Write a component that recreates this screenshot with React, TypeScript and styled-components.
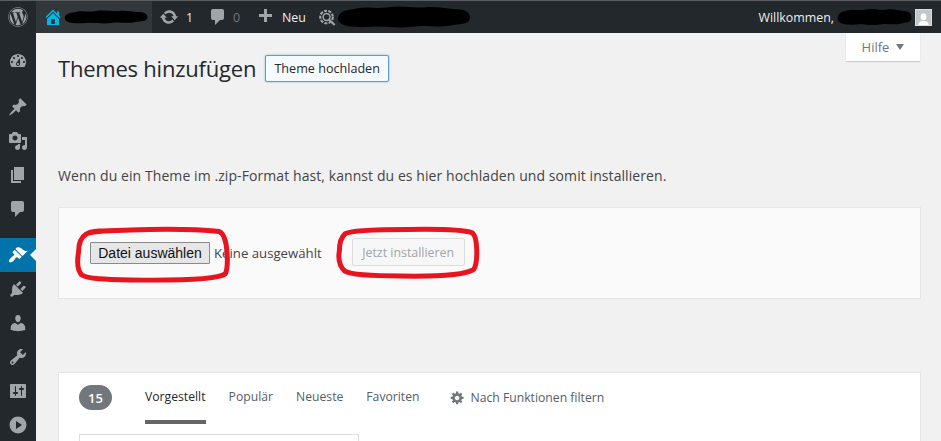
import React from 'react';
import styled, { createGlobalStyle } from 'styled-components';
import { FaWordpress } from 'react-icons/fa';

const GlobalStyle = createGlobalStyle`
  html, body {
    margin: 0;
    padding: 0;
    height: 100%;
    overflow: hidden;
    background: #f1f1f1;
    font-family: 'Open Sans', 'Noto Sans', sans-serif;
  }
`;

const tabs = ['Vorgestellt', 'Populär', 'Neueste', 'Favoriten'];

const paths = {
  home: 'M16 8.5l1.53 1.53-1.06 1.06L10 4.62l-6.47 6.47-1.06-1.06L10 2.5l4 4v-2h2v4zm-6-2.46l6 5.99V18H4v-5.97zM12 17v-5H8v5h4z',
  update:
    'M10.2 3.28c3.53 0 6.43 2.61 6.92 6h2.08l-3.5 4-3.5-4h2.32c-.45-1.97-2.21-3.45-4.32-3.45-1.45 0-2.73.71-3.54 1.78L4.95 5.66C6.23 4.2 8.11 3.28 10.2 3.28zm-.4 13.44c-3.52 0-6.43-2.61-6.92-6H.8l3.5-4c1.17 1.33 2.33 2.67 3.5 4H5.48c.45 1.97 2.21 3.45 4.32 3.45 1.45 0 2.73-.71 3.54-1.78l1.71 1.95c-1.28 1.46-3.15 2.38-5.25 2.38z',
  comment: 'M5 2h9c1.1 0 2 .9 2 2v7c0 1.1-.9 2-2 2h-2l-5 5v-5H5c-1.1 0-2-.9-2-2V4c0-1.1.9-2 2-2z',
  plus: 'M17 7v3h-5v5H9v-5H4V7h5V2h3v5h5z',
  dashboard:
    'M3.76 16h12.48c1.1-1.37 1.76-3.11 1.76-5 0-4.42-3.58-8-8-8s-8 3.58-8 8c0 1.89.66 3.63 1.76 5zM10 4c.55 0 1 .45 1 1s-.45 1-1 1-1-.45-1-1 .45-1 1-1zM6 6c.55 0 1 .45 1 1s-.45 1-1 1-1-.45-1-1 .45-1 1-1zm8 0c.55 0 1 .45 1 1s-.45 1-1 1-1-.45-1-1 .45-1 1-1zm-5.37 5.55L12 7v6c0 1.1-.9 2-2 2s-2-.9-2-2c0-.57.24-1.08.63-1.45zM4 10c.55 0 1 .45 1 1s-.45 1-1 1-1-.45-1-1 .45-1 1-1zm12 0c.55 0 1 .45 1 1s-.45 1-1 1-1-.45-1-1 .45-1 1-1zm-5 3c0-.55-.45-1-1-1s-1 .45-1 1 .45 1 1 1 1-.45 1-1z',
  pin: 'M10.44 3.02l1.82-1.82 6.36 6.35-1.83 1.82c-1.05-.68-2.48-.57-3.41.36l-.75.75c-.92.93-1.04 2.35-.35 3.41l-1.83 1.82-2.41-2.41-2.8 2.79c-.42.42-3.38 2.71-3.8 2.29s1.86-3.39 2.28-3.81l2.79-2.79L4.1 9.36l1.83-1.82c1.05.69 2.48.57 3.41-.36l.75-.75c.93-.92 1.05-2.35.35-3.41z',
  media:
    'M13 11V4c0-.55-.45-1-1-1h-1.67L9 1H5L3.67 3H2c-.55 0-1 .45-1 1v7c0 .55.45 1 1 1h10c.55 0 1-.45 1-1zM7 4.5c1.38 0 2.5 1.12 2.5 2.5S8.38 9.5 7 9.5 4.5 8.38 4.5 7 5.62 4.5 7 4.5zM14 6h5v10.5c0 1.38-1.12 2.5-2.5 2.5S14 17.88 14 16.5s1.12-2.5 2.5-2.5c.17 0 .34.02.5.05V9h-3V6zm-4 8.05V13h2v3.5c0 1.38-1.12 2.5-2.5 2.5S7 17.88 7 16.5 8.12 14 9.5 14c.17 0 .34.02.5.05z',
  page: 'M6 15V2h10v13H6zm-1 1h8v2H3V5h2v11z',
  brush:
    'M14.48 11.06L7.41 3.99l1.5-1.5c.5-.56 2.3-.47 3.51.32 1.21.8 1.43 1.28 2.91 2.1 1.18.64 2.45 1.26 4.45.85zm-.71.71L6.7 4.7 4.93 6.47c-.39.39-.39 1.02 0 1.41l1.06 1.06c.39.39.39 1.03 0 1.42-.6.6-1.43 1.11-2.21 1.69-.35.26-.7.53-1.01.84C1.43 14.23.4 16.08 1.4 17.07c.99 1 2.84-.03 4.18-1.36.31-.31.58-.66.85-1.02.57-.78 1.08-1.61 1.69-2.21.39-.39 1.02-.39 1.41 0l1.06 1.06c.39.39 1.02.39 1.41 0z',
  plugin:
    'M13.11 4.36L9.87 7.6 8 5.73l3.24-3.24c.35-.34 1.05-.2 1.56.32.52.51.66 1.21.31 1.55zm-8 1.77l.91-1.12 9.01 9.01-1.19.84c-.71.71-2.63 1.16-3.82 1.16H6.14L4.9 17.26c-.59.59-1.54.59-2.12 0-.59-.58-.59-1.53 0-2.12l1.24-1.24v-3.88c0-1.13.4-3.19 1.09-3.89zm7.26 3.97l3.24-3.24c.34-.35 1.04-.21 1.55.31.52.51.66 1.21.31 1.55l-3.24 3.25z',
  users:
    'M10 9.25c-2.27 0-2.73-3.44-2.73-3.44C7 4.02 7.82 2 9.97 2c2.16 0 2.98 2.02 2.71 3.81 0 0-.41 3.44-2.68 3.44zm0 2.57L12.72 10c2.39 0 4.52 2.33 4.52 4.53v2.49s-3.65 1.13-7.24 1.13c-3.65 0-7.24-1.13-7.24-1.13v-2.49c0-2.25 1.94-4.5 4.47-4.5z',
  tools:
    'M16.68 9.77c-1.34 1.34-3.3 1.67-4.95.99l-5.41 6.52c-.99.99-2.59.99-3.58 0s-.99-2.59 0-3.57l6.52-5.42c-.68-1.65-.35-3.61.99-4.95 1.28-1.28 3.12-1.62 4.72-1.06l-2.89 2.89 2.82 2.82 2.86-2.87c.53 1.58.18 3.39-1.08 4.65zM3.81 16.21c.4.39 1.04.39 1.43 0 .4-.4.4-1.04 0-1.43-.39-.4-1.03-.4-1.43 0-.39.39-.39 1.03 0 1.43z',
  settings:
    'M18 16V4c0-.55-.45-1-1-1H3c-.55 0-1 .45-1 1v12c0 .55.45 1 1 1h14c.55 0 1-.45 1-1zM8 11h1c.55 0 1 .45 1 1s-.45 1-1 1H8v1.5c0 .28-.22.5-.5.5s-.5-.22-.5-.5V13H6c-.55 0-1-.45-1-1s.45-1 1-1h1V5.5c0-.28.22-.5.5-.5s.5.22.5.5V11zm5-2h-1c-.55 0-1-.45-1-1s.45-1 1-1h1V5.5c0-.28.22-.5.5-.5s.5.22.5.5V7h1c.55 0 1 .45 1 1s-.45 1-1 1h-1v5.5c0 .28-.22.5-.5.5s-.5-.22-.5-.5V9z',
  play: 'M10 1.5a8.5 8.5 0 1 0 0 17 8.5 8.5 0 0 0 0-17zM8 6l6 4-6 4z',
  gear: 'M18 12h-2.18c-.17.7-.44 1.35-.81 1.93l1.54 1.54-2.1 2.1-1.54-1.54c-.58.36-1.23.63-1.91.79V19H8v-2.18c-.68-.16-1.33-.43-1.91-.79l-1.54 1.54-2.12-2.12 1.54-1.54c-.36-.58-.63-1.23-.79-1.91H1V9.03h2.17c.16-.7.44-1.35.8-1.94L2.43 5.55l2.1-2.1 1.54 1.54c.58-.37 1.24-.64 1.93-.81V2h3v2.18c.68.16 1.33.43 1.91.79l1.54-1.54 2.12 2.12-1.54 1.54c.36.59.64 1.24.8 1.94H18V12zm-8.5 1.5c1.66 0 3-1.34 3-3s-1.34-3-3-3-3 1.34-3 3 1.34 3 3 3z',
};

const Icon = ({ name, size = 20, color = '#a0a5aa' }: { name: keyof typeof paths; size?: number; color?: string }) => (
  <svg width={size} height={size} viewBox="0 0 20 20" fill={color} fillRule="evenodd" style={{ flex: 'none' }}>
    <path d={paths[name]} />
  </svg>
);

const Blob = ({ w, h }: { w: number; h: number }) => (
  <svg width={w} height={h} viewBox="0 0 100 24" preserveAspectRatio="none" style={{ display: 'block', flex: 'none' }}>
    <path
      d="M1 12 C3 5 9 6 15 4 C24 2 30 5 38 3 C48 1 56 4 66 3 C76 2 84 5 92 5 C98 6 100 10 99 14 C98 19 92 18 84 20 C74 22 66 19 56 21 C46 23 36 20 26 21 C16 22 8 21 4 19 C2 17 0 15 1 12 Z"
      fill="#000"
    />
  </svg>
);

const SiteGearIcon = () => (
  <svg width="19" height="19" viewBox="0 0 20 20" fill="none" stroke="#a0a5aa" style={{ flex: 'none' }}>
    <circle cx="9" cy="9.5" r="6.6" strokeWidth="2.2" strokeDasharray="3.2 1.4" />
    <circle cx="9" cy="9.5" r="3.6" strokeWidth="1.6" />
    <path d="M11.5 12 L17.5 18" strokeWidth="2.2" />
  </svg>
);

const Scribble = ({ d }: { d: string }) => (
  <Ring viewBox="0 0 100 100" preserveAspectRatio="none">
    <path d={d} fill="none" stroke="#e8141f" strokeWidth="5" vectorEffect="non-scaling-stroke" />
  </Ring>
);

const menu: (keyof typeof paths)[] = ['pin', 'media', 'page', 'comment'];
const lowerMenu: (keyof typeof paths)[] = ['plugin', 'users', 'tools', 'settings', 'play'];

const App = () => {
  return (
    <Page>
      <GlobalStyle />
      <AdminBar>
        <LogoItem>
          <FaWordpress size={20} color="#a0a5aa" />
        </LogoItem>
        <SiteItem>
          <Icon name="home" size={20} color="#00b9eb" />
          <Blob w={84} h={16} />
        </SiteItem>
        <BarItem $gap={7} $width={49}>
          <Icon name="update" />
          <BarText>1</BarText>
        </BarItem>
        <BarItem $gap={5} $width={47}>
          <Icon name="comment" />
          <BarText $dim>0</BarText>
        </BarItem>
        <BarItem $gap={7} $width={63}>
          <Icon name="plus" />
          <BarText>Neu</BarText>
        </BarItem>
        <BarItem $gap={0} $width={170}>
          <SiteGearIcon />
          <Blob w={134} h={26} />
        </BarItem>
        <BarRight>
          <BarText>Willkommen,</BarText>
          <Blob w={75} h={20} />
          <Avatar>
            <svg width="17" height="17" viewBox="0 0 17 17" fill="#fff">
              <ellipse cx="8.5" cy="6.5" rx="3.3" ry="3.9" />
              <path d="M2.5 17 C2.5 12.5 5 11 8.5 11 C12 11 14.5 12.5 14.5 17 Z" />
            </svg>
          </Avatar>
        </BarRight>
      </AdminBar>
      <Body>
        <SideMenu>
          <MenuItem><Icon name="dashboard" /></MenuItem>
          <MenuGroup>
            {menu.map((name) => (
              <MenuItem key={name}><Icon name={name} /></MenuItem>
            ))}
          </MenuGroup>
          <MenuGroup>
            <ActiveItem><Icon name="brush" color="#fff" /></ActiveItem>
            {lowerMenu.map((name) => (
              <MenuItem key={name}><Icon name={name} /></MenuItem>
            ))}
          </MenuGroup>
        </SideMenu>
        <Main>
          <HelpRow>
            <HelpTab>
              Hilfe
              <Caret />
            </HelpTab>
          </HelpRow>
          <Heading>
            <Title>Themes hinzufügen</Title>
            <UploadButton>Theme hochladen</UploadButton>
          </Heading>
          <Hint>Wenn du ein Theme im .zip-Format hast, kannst du es hier hochladen und somit installieren.</Hint>
          <UploadCard>
            <FileGroup>
              <FileButton>Datei auswählen</FileButton>
              <NoFile>Keine ausgewählt</NoFile>
              <Scribble d="M6 10 C9 3 20 3 35 2 C55 0 80 1 93 5 C99 12 99 72 97 86 C92 98 60 99 35 98 C18 97 7 96 3 88 C0 78 0 62 1 45 C1 28 2 17 6 10 Z" />
            </FileGroup>
            <InstallGroup>
              <InstallButton disabled>Jetzt installieren</InstallButton>
              <Scribble d="M5 10 C9 2 30 1 50 1 C70 0 90 2 96 8 C100 18 100 70 97 84 C90 97 65 99 45 98 C28 98 10 97 5 88 C1 78 0 62 1 45 C1 28 2 18 5 10 Z" />
            </InstallGroup>
          </UploadCard>
          <ThemesPanel>
            <FilterBar>
              <CountBadge>15</CountBadge>
              <TabList>
                {tabs.map((tab, i) => (
                  <Tab key={tab} $active={i === 0}>{tab}</Tab>
                ))}
              </TabList>
              <FilterLink>
                <Icon name="gear" size={15} color="#72777c" />
                Nach Funktionen filtern
              </FilterLink>
            </FilterBar>
            <ThemeCard />
          </ThemesPanel>
        </Main>
      </Body>
    </Page>
  );
};

export default App;

const Page = styled.div`
  width: 941px;
  height: 441px;
  display: flex;
  flex-direction: column;
  overflow: hidden;
`;
const AdminBar = styled.div`
  height: 33px;
  box-sizing: border-box;
  flex: none;
  display: flex;
  align-items: center;
  background: #23282d;
  border-top: 1px solid #5a5e62;
  color: #eee;
`;
const LogoItem = styled.div`
  width: 36px;
  display: flex;
  justify-content: center;
  flex: none;
  padding-bottom: 1px;
`;
const SiteItem = styled.div`
  width: 116px;
  height: 100%;
  flex: none;
  display: flex;
  align-items: center;
  gap: 1px;
  padding-left: 7px;
  box-sizing: border-box;
  background: #32373c;
`;
const BarItem = styled.div<{ $gap: number; $width: number }>`
  width: ${(p) => p.$width}px;
  flex: none;
  display: flex;
  align-items: center;
  gap: ${(p) => p.$gap}px;
  padding-left: 7px;
  box-sizing: border-box;
`;
const BarText = styled.span<{ $dim?: boolean }>`
  font-size: 12.4px;
  white-space: nowrap;
  color: ${(p) => (p.$dim ? '#72777c' : '#eee')};
`;
const BarRight = styled.div`
  margin-left: auto;
  padding-right: 9px;
  display: flex;
  align-items: center;
  gap: 3px;
`;
const Avatar = styled.div`
  width: 17px;
  height: 17px;
  background: #c4c6c8;
  overflow: hidden;
  border: 1px solid #ddd;
  box-sizing: border-box;
  display: flex;
`;
const Body = styled.div`
  flex: 1;
  display: flex;
  min-height: 0;
`;
const SideMenu = styled.div`
  width: 36px;
  flex: none;
  background: #23282d;
  padding-top: 11px;
  box-sizing: border-box;
`;
const MenuGroup = styled.div`
  margin-top: 12px;
`;
const MenuItem = styled.div`
  height: 34px;
  display: flex;
  align-items: center;
  justify-content: center;
`;
const ActiveItem = styled(MenuItem)`
  position: relative;
  background: #0073aa;
  &::after {
    content: '';
    position: absolute;
    right: 0;
    top: 11px;
    border: 6px solid transparent;
    border-right-color: #f1f1f1;
    border-left-width: 0;
  }
`;
const Main = styled.div`
  flex: 1;
  min-width: 0;
  padding: 0 21px 0 22px;
`;
const HelpRow = styled.div`
  display: flex;
  justify-content: flex-end;
  height: 0;
`;
const HelpTab = styled.div`
  width: 74px;
  height: 28px;
  flex: none;
  display: flex;
  align-items: center;
  justify-content: center;
  gap: 7px;
  font-size: 13px;
  color: #72777c;
  background: #fff;
  box-shadow: 0 1px 1px rgba(0, 0, 0, 0.15);
`;
const Caret = styled.span`
  border-left: 4.5px solid transparent;
  border-right: 4.5px solid transparent;
  border-top: 6px solid #72777c;
`;
const Heading = styled.div`
  display: flex;
  align-items: center;
  gap: 9px;
  padding-top: 21px;
`;
const Title = styled.h1`
  margin: 0;
  font-size: 22px;
  font-weight: 400;
  letter-spacing: -0.22px;
  line-height: 28px;
  color: #23282d;
  white-space: nowrap;
`;
const UploadButton = styled.button`
  width: 124px;
  height: 27px;
  padding: 0;
  font-family: inherit;
  font-size: 12.6px;
  font-weight: 500;
  color: #23282d;
  background: #f7fafc;
  border: 1px solid #5b9dd9;
  border-radius: 2px;
  box-shadow: 0 0 2px rgba(30, 140, 190, 0.6);
`;
const Hint = styled.p`
  margin: 84px 0 0;
  font-size: 14px;
  letter-spacing: 0.08px;
  line-height: 20px;
  color: #444;
  white-space: nowrap;
`;
const UploadCard = styled.div`
  margin: 21px -1px 0 0;
  height: 92px;
  box-sizing: border-box;
  display: flex;
  align-items: center;
  padding: 0 0 0 31px;
  background: #fafafa;
  border: 1px solid #e5e5e5;
`;
const FileGroup = styled.div`
  position: relative;
  display: flex;
  align-items: center;
  gap: 4px;
  & > svg {
    left: -13px;
    top: -13px;
    width: 153px;
    height: 52px;
  }
`;
const FileButton = styled.button`
  width: 120px;
  height: 22px;
  padding: 0;
  font-family: 'Liberation Sans', Arial, sans-serif;
  font-size: 14px;
  color: #111;
  background: #e6e6e6;
  border: 1px solid #8a8a8a;
  border-radius: 1px;
`;
const NoFile = styled.span`
  font-size: 13.2px;
  color: #444;
  white-space: nowrap;
`;
const Ring = styled.svg`
  position: absolute;
  pointer-events: none;
  overflow: visible;
`;
const InstallGroup = styled.div`
  position: relative;
  margin: -2px 0 0 30px;
  display: flex;
  & > svg {
    left: -14px;
    top: -9px;
    width: 140px;
    height: 48px;
  }
`;
const InstallButton = styled.button`
  width: 113px;
  height: 28px;
  padding: 0;
  font-family: inherit;
  font-size: 12.4px;
  color: #a0a5aa;
  background: #f7f7f7;
  border: 1px solid #ddd;
  border-radius: 2px;
`;
const ThemesPanel = styled.div`
  margin: 73px -1px 0 0;
  height: 80px;
  background: #fff;
  border: 1px solid #e5e5e5;
  border-bottom: 0;
  box-sizing: border-box;
`;
const FilterBar = styled.div`
  height: 61px;
  box-sizing: border-box;
  display: flex;
  align-items: flex-start;
  padding: 12px 0 0 20px;
`;
const CountBadge = styled.div`
  width: 33px;
  height: 25px;
  flex: none;
  display: flex;
  align-items: center;
  justify-content: center;
  border-radius: 13px;
  background: #72777c;
  color: #fff;
  font-size: 13px;
  font-weight: 600;
`;
const TabList = styled.div`
  display: flex;
  gap: 23px;
  margin-left: 33px;
`;
const Tab = styled.div<{ $active?: boolean }>`
  height: 39px;
  box-sizing: border-box;
  padding-top: 3px;
  font-size: 12.2px;
  white-space: nowrap;
  color: ${(p) => (p.$active ? '#23282d' : '#555d66')};
  border-bottom: 4px solid ${(p) => (p.$active ? '#666' : 'transparent')};
`;
const FilterLink = styled.div`
  display: flex;
  align-items: center;
  gap: 6px;
  height: 18px;
  margin: 3px 0 0 30px;
  font-size: 12.2px;
  color: #555d66;
  white-space: nowrap;
`;
const ThemeCard = styled.div`
  margin-left: 20px;
  width: 280px;
  height: 20px;
  box-sizing: border-box;
  background: #fff;
  border: 1px solid #ddd;
  border-bottom: 0;
`;
